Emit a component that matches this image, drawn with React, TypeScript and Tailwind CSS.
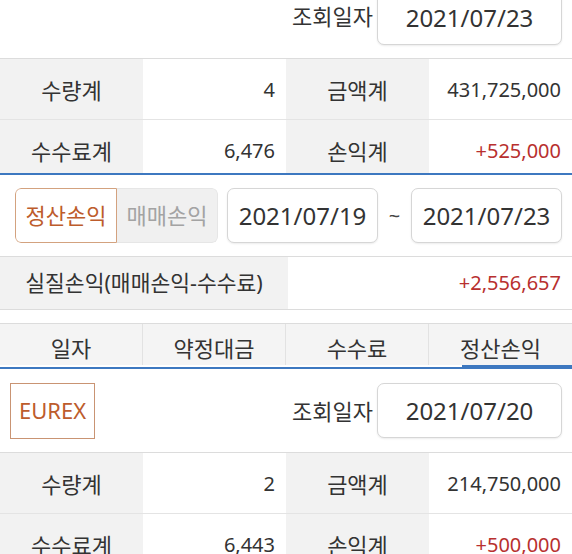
const font = { fontFamily: '"Noto Sans", "Noto Sans CJK KR", sans-serif' };

function DateBox({ value, className = "" }: { value: string; className?: string }) {
  return (
    <div
      className={`flex h-[55px] items-center justify-center rounded-[7px] border border-[#d6d6d6] bg-white text-[24px] text-[#333] shadow-[0_1px_2px_rgba(0,0,0,0.08)] ${className}`}
    >
      {value}
    </div>
  );
}

function SummaryRows({ qty, amount, fee, pnl }: { qty: string; amount: string; fee: string; pnl: string }) {
  const label = "flex items-center justify-center bg-[#f2f2f2] pt-[2px] text-[22px]";
  const val = "flex items-center justify-end pr-[11px] pt-[2px]";
  return (
    <div className="text-[20px] text-[#333]">
      <div className="grid h-[61px] grid-cols-4 border-b border-[#e4e4e4]">
        <div className={label}>수량계</div>
        <div className={val}>{qty}</div>
        <div className={label}>금액계</div>
        <div className={val}>{amount}</div>
      </div>
      <div className="grid h-[61px] grid-cols-4 border-b border-[#e4e4e4]">
        <div className={label}>수수료계</div>
        <div className={val}>{fee}</div>
        <div className={label}>손익계</div>
        <div className={`${val} text-[#b8302f]`}>{pnl}</div>
      </div>
    </div>
  );
}

export default function App() {
  return (
    <div className="h-[554px] w-[572px] overflow-hidden bg-white" style={font}>
      {/* previous account block, scrolled up */}
      <div className="h-[173px] overflow-hidden">
        <div className="flex h-[59px] items-end justify-end gap-[4px] border-b border-[#dcdcdc] pb-[13px] pr-[10px]">
          <span className="mb-[12px] text-[22px] text-[#333]">조회일자</span>
          <DateBox value="2021/07/23" className="w-[185px] shrink-0" />
        </div>
        <SummaryRows qty="4" amount="431,725,000" fee="6,476" pnl="+525,000" />
      </div>
      <div className="h-[2px] bg-[#3d78c0]" />

      {/* period filter */}
      <div className="flex h-[82px] items-center border-b border-[#dcdcdc] pl-[15px] pr-[10px]">
        <div className="flex h-[55px] w-[203px] overflow-hidden rounded-[6px] text-[22px]">
          <div className="flex w-[102px] items-center justify-center rounded-l-[6px] border border-[#d3a27f] bg-white text-[#bd5c2c]">
            정산손익
          </div>
          <div className="flex flex-1 items-center justify-center rounded-r-[6px] border border-l-0 border-[#e6e6e6] bg-[#f0f0f0] text-[#a3a3a3]">
            매매손익
          </div>
        </div>
        <DateBox value="2021/07/19" className="ml-[9px] w-[151px]" />
        <span className="flex-1 text-center text-[20px] text-[#444]">~</span>
        <DateBox value="2021/07/23" className="w-[151px]" />
      </div>

      <div className="flex h-[53px] border-b border-[#dcdcdc] text-[20px] text-[#333]">
        <div className="flex w-[288px] items-center justify-center bg-[#f2f2f2] text-[21.5px]">실질손익(매매손익-수수료)</div>
        <div className="flex flex-1 items-center justify-end pr-[11px] text-[#b8302f]">+2,556,657</div>
      </div>

      {/* list header */}
      <div className="mt-[13px] grid h-[42px] grid-cols-4 border-t border-[#dcdcdc] bg-[#f4f4f4] text-[22px] text-[#333]">
        <div className="flex items-end justify-center border-r border-[#e2e2e2]">일자</div>
        <div className="flex items-end justify-center border-r border-[#e2e2e2]">약정대금</div>
        <div className="flex items-end justify-center border-r border-[#e2e2e2]">수수료</div>
        <div className="flex items-end justify-center">정산손익</div>
      </div>
      <div className="flex h-[4px] items-end">
        <div className="h-[2px] flex-1 bg-[#3d78c0]" />
        <div className="h-[4px] w-[110px] bg-[#3d78c0]" />
      </div>

      {/* EUREX block */}
      <div className="flex h-[84px] items-center border-b border-[#dcdcdc] pl-[10px] pr-[10px]">
        <div className="flex h-[56px] w-[85px] items-center justify-center border border-[#c99473] text-[22px] text-[#bd5c2c]">
          EUREX
        </div>
        <span className="ml-auto mr-[4px] pt-[2px] text-[22px] text-[#333]">조회일자</span>
        <DateBox value="2021/07/20" className="w-[185px]" />
      </div>
      <SummaryRows qty="2" amount="214,750,000" fee="6,443" pnl="+500,000" />
    </div>
  );
}
